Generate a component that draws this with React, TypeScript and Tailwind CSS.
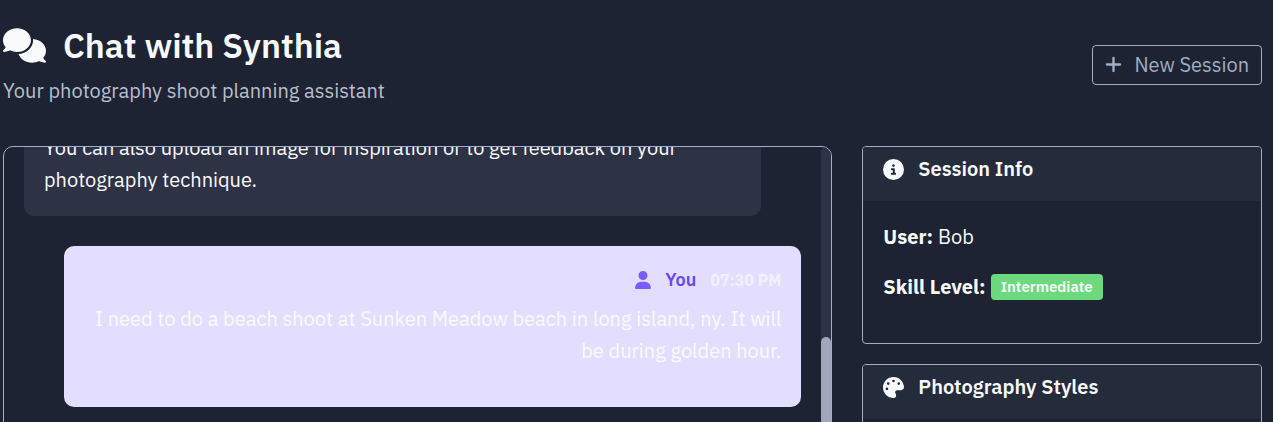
import type { ReactNode } from "react";
import { FaCircleInfo, FaComments, FaPalette, FaPlus, FaUser } from "react-icons/fa6";

function Card({ icon, title, children }: { icon: ReactNode; title: string; children?: ReactNode }) {
  return (
    <section className="shrink-0 overflow-hidden rounded-[4px] border border-[#a0aecb]">
      <h2 className="flex h-[54px] items-start gap-[14px] bg-[#242b3a] px-5 pt-[6px] text-[20px] leading-8 font-semibold">
        <span className="flex h-8 items-center text-[21px]">{icon}</span>
        {title}
      </h2>
      <div className="flex min-h-[140px] flex-col gap-[18px] px-5 pt-5 pb-10 text-[20px] leading-8">{children}</div>
    </section>
  );
}

export default function App() {
  return (
    <div className="flex h-screen flex-col overflow-hidden bg-[#1d2332] pr-[11px] pl-[3px] font-['IBM_Plex_Sans','Noto_Sans',sans-serif] text-[#f8fafc]">
      <header className="flex shrink-0 items-center justify-between pt-[22px] pb-[39px]">
        <div>
          <h1 className="flex items-center gap-[17px] text-[34px] leading-[46px] font-semibold">
            <FaComments className="h-[35px] w-[43px]" />
            Chat with Synthia
          </h1>
          <p className="mt-[7px] text-[20px] leading-8 text-[#b9bfcb]">Your photography shoot planning assistant</p>
        </div>
        <button
          type="button"
          className="flex h-10 items-center gap-3 rounded-[4px] border border-[#a0aecb] px-3 text-[20px] text-[#a0aec5]"
        >
          <FaPlus className="h-[19px] w-[17px]" />
          New Session
        </button>
      </header>

      <main className="grid min-h-0 flex-1 grid-cols-3 gap-[30px]">
        <section className="col-span-2 -mb-5 flex min-h-0 overflow-hidden rounded-[10px] border border-[#a0aecb]" aria-label="Conversation">
          <div className="flex flex-1 flex-col gap-[30px] overflow-hidden px-5 text-[20px] leading-8">
            <article className="-mt-5 mr-10 shrink-0 rounded-[10px] bg-[#2d3245] px-5 pt-[5px] pb-5">
              <p>You can also upload an image for inspiration or to get feedback on your photography technique.</p>
            </article>
            <article className="ml-10 shrink-0 rounded-[10px] bg-[#e3deff] px-5 pt-5 pb-10 text-right">
              <div className="mb-[9px] flex h-7 items-center justify-end gap-[14px] font-semibold">
                <FaUser className="h-[18px] w-4 text-[#775cff]" />
                <span className="text-[18px] text-[#6a48f5]">You</span>
                <time className="text-[16px] font-bold text-[#f2f0ff]">07:30 PM</time>
              </div>
              <p>I need to do a beach shoot at Sunken Meadow beach in long island, ny. It will be during golden hour.</p>
            </article>
          </div>
          <div className="w-[10px] shrink-0 rounded-t-[5px] bg-[#2d3245] pt-[190px]">
            <div className="h-full rounded-[5px] bg-[#a0a7bb]" />
          </div>
        </section>

        <aside className="flex min-h-0 flex-col gap-5">
          <Card icon={<FaCircleInfo />} title="Session Info">
            <p>
              <strong>User:</strong> Bob
            </p>
            <p className="flex items-center gap-[5px]">
              <strong>Skill Level:</strong>
              <span className="rounded-[4px] bg-[#6cd97e] px-[10px] text-[15px] leading-[26px] font-semibold">
                Intermediate
              </span>
            </p>
          </Card>
          <Card icon={<FaPalette />} title="Photography Styles" />
        </aside>
      </main>
    </div>
  );
}
